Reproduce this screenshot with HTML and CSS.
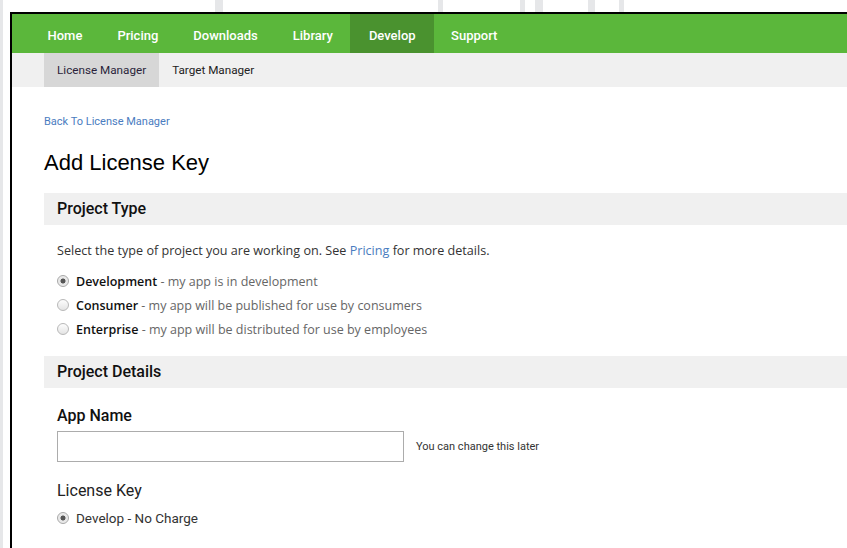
FILE: index.html
```html
<!DOCTYPE html>
<html lang="en">
<head>
<meta charset="utf-8">
<title>Add License Key</title>
<link rel="stylesheet" href="styles.css">
</head>
<body>
<div class="desktop">
  <div class="window">
    <nav class="main-nav">
      <a class="nav-item" href="#">Home</a>
      <a class="nav-item" href="#">Pricing</a>
      <a class="nav-item" href="#">Downloads</a>
      <a class="nav-item" href="#">Library</a>
      <a class="nav-item active" href="#">Develop</a>
      <a class="nav-item" href="#">Support</a>
    </nav>
    <nav class="sub-nav">
      <a class="sub-item active" href="#">License Manager</a>
      <a class="sub-item" href="#">Target Manager</a>
    </nav>
    <main class="content">
      <a class="back-link" href="#">Back To License Manager</a>
      <h1 class="page-title">Add License Key</h1>

      <section class="panel">
        <h2 class="panel-title">Project Type</h2>
        <div class="panel-body">
          <p class="intro">Select the type of project you are working on. See <a href="#" class="inline-link">Pricing</a> for more details.</p>
          <label class="choice"><input type="radio" name="ptype" checked><b>Development</b><span class="hint">&nbsp;- my app is in development</span></label>
          <label class="choice"><input type="radio" name="ptype"><b>Consumer</b><span class="hint">&nbsp;- my app will be published for use by consumers</span></label>
          <label class="choice"><input type="radio" name="ptype"><b>Enterprise</b><span class="hint">&nbsp;- my app will be distributed for use by employees</span></label>
        </div>
      </section>

      <section class="panel">
        <h2 class="panel-title">Project Details</h2>
        <div class="panel-body details">
          <h3 class="field-label">App Name</h3>
          <div class="field-row">
            <input class="text-input" type="text">
            <span class="field-note">You can change this later</span>
          </div>
          <h3 class="field-label light">License Key</h3>
          <label class="choice small"><input type="radio" name="key" checked>Develop - No Charge</label>
        </div>
      </section>
    </main>
  </div>
</div>
</body>
</html>
```

FILE: styles.css
```css
* { box-sizing: border-box; }

html, body {
  margin: 0;
  padding: 0;
  height: 100%;
  overflow: hidden;
}

body {
  background-color: #fff;
  /* scrollbars of the windows sitting behind */
  background-image:
    linear-gradient(#e6e7e9, #e6e7e9),
    linear-gradient(#e6e7e9, #e6e7e9),
    linear-gradient(#e6e7e9, #e6e7e9),
    linear-gradient(#e6e7e9, #e6e7e9),
    linear-gradient(#e6e7e9, #e6e7e9),
    linear-gradient(#e6e7e9, #e6e7e9),
    linear-gradient(#e6e7e9, #e6e7e9);
  background-repeat: no-repeat;
  background-size: 3px 100%, 8px 12px, 5px 12px, 5px 12px, 8px 12px, 7px 12px, 5px 12px;
  background-position: 0 0, 215px 0, 438px 0, 520px 0, 535px 0, 588px 0, 619px 0;
  font-family: Roboto, "Liberation Sans", sans-serif;
  color: #222;
}

.desktop {
  padding: 12px 0 0 10px;
  height: 100%;
}

.window {
  height: 100%;
  border-top: 2px solid #000;
  border-left: 2px solid #000;
  background: #fff;
}

/* primary navigation */
.main-nav {
  display: flex;
  height: 39px;
  padding-left: 18px;
  background: #5bb73b;
}

.nav-item {
  display: flex;
  align-items: center;
  padding: 3px 17.5px 0;
  color: #fff;
  font-size: 13px;
  font-weight: 500;
  text-decoration: none;
}

.nav-item.active {
  padding: 3px 18px 0 18.5px;
  background: #4a922f;
}

/* secondary navigation */
.sub-nav {
  display: flex;
  height: 34px;
  padding-left: 32px;
  background: #f0f0f0;
}

.sub-item {
  display: flex;
  align-items: center;
  padding: 0 13px;
  color: #222;
  font-size: 11.7px;
  text-decoration: none;
}

.sub-item.active {
  background: #d7d7d7;
  color: #2a1f3a;
}

/* page body */
.content {
  padding: 28px 0 0 32px;
}

.back-link {
  display: block;
  height: 14px;
  line-height: 14px;
  font-size: 11px;
  color: #4a7cc0;
  text-decoration: none;
}

.page-title {
  margin: 20px 0 0;
  height: 28px;
  line-height: 28px;
  font-family: "Liberation Sans", Arial, sans-serif;
  font-size: 22px;
  font-weight: 400;
  color: #000;
}

.panel-title {
  margin: 0;
  height: 32px;
  line-height: 32px;
  padding-left: 13px;
  background: #f0f0f0;
  font-size: 16px;
  font-weight: 500;
  color: #111;
}

.page-title + .panel {
  margin-top: 16px;
}

.panel-body {
  padding: 17px 0 15px 13px;
}

.intro {
  margin: 0 0 9px;
  height: 18px;
  line-height: 18px;
  font-family: "Open Sans", "Liberation Sans", sans-serif;
  font-size: 12.6px;
  color: #333;
}

.inline-link {
  color: #4a7cc0;
  text-decoration: none;
}

.choice {
  display: flex;
  align-items: center;
  height: 24px;
  font-family: "Open Sans", "Liberation Sans", sans-serif;
  font-size: 12.5px;
  color: #111;
}

.choice b {
  font-weight: 600;
}

.hint {
  color: #666;
}

.choice input {
  -webkit-appearance: none;
  appearance: none;
  width: 12px;
  height: 12px;
  margin: 0 7px 0 0;
  border: 1px solid #b8b8b8;
  border-radius: 50%;
  background: linear-gradient(#fdfdfd, #e4e4e4);
  flex: none;
}

.choice input:checked {
  background: radial-gradient(circle, #555 0 2.2px, #e4e4e4 2.8px, #f4f4f4 100%);
  border-color: #a8a8a8;
}

.details {
  padding-top: 18px;
}

.field-label {
  margin: 0;
  height: 20px;
  line-height: 20px;
  font-size: 16px;
  font-weight: 500;
  color: #111;
}

.field-label.light {
  font-weight: 400;
  color: #222;
  margin-top: 19px;
}

.field-row {
  display: flex;
  align-items: center;
  margin-top: 5px;
}

.text-input {
  width: 347px;
  height: 31px;
  margin: 0;
  border: 1px solid #acacac;
  border-radius: 0;
  background: #fff;
  font-size: 13px;
}

.field-note {
  margin-left: 12px;
  font-size: 11px;
  color: #333;
}

.choice.small {
  margin-top: 5px;
  font-family: Roboto, "Liberation Sans", sans-serif;
  font-size: 13.5px;
  color: #333;
}
```
